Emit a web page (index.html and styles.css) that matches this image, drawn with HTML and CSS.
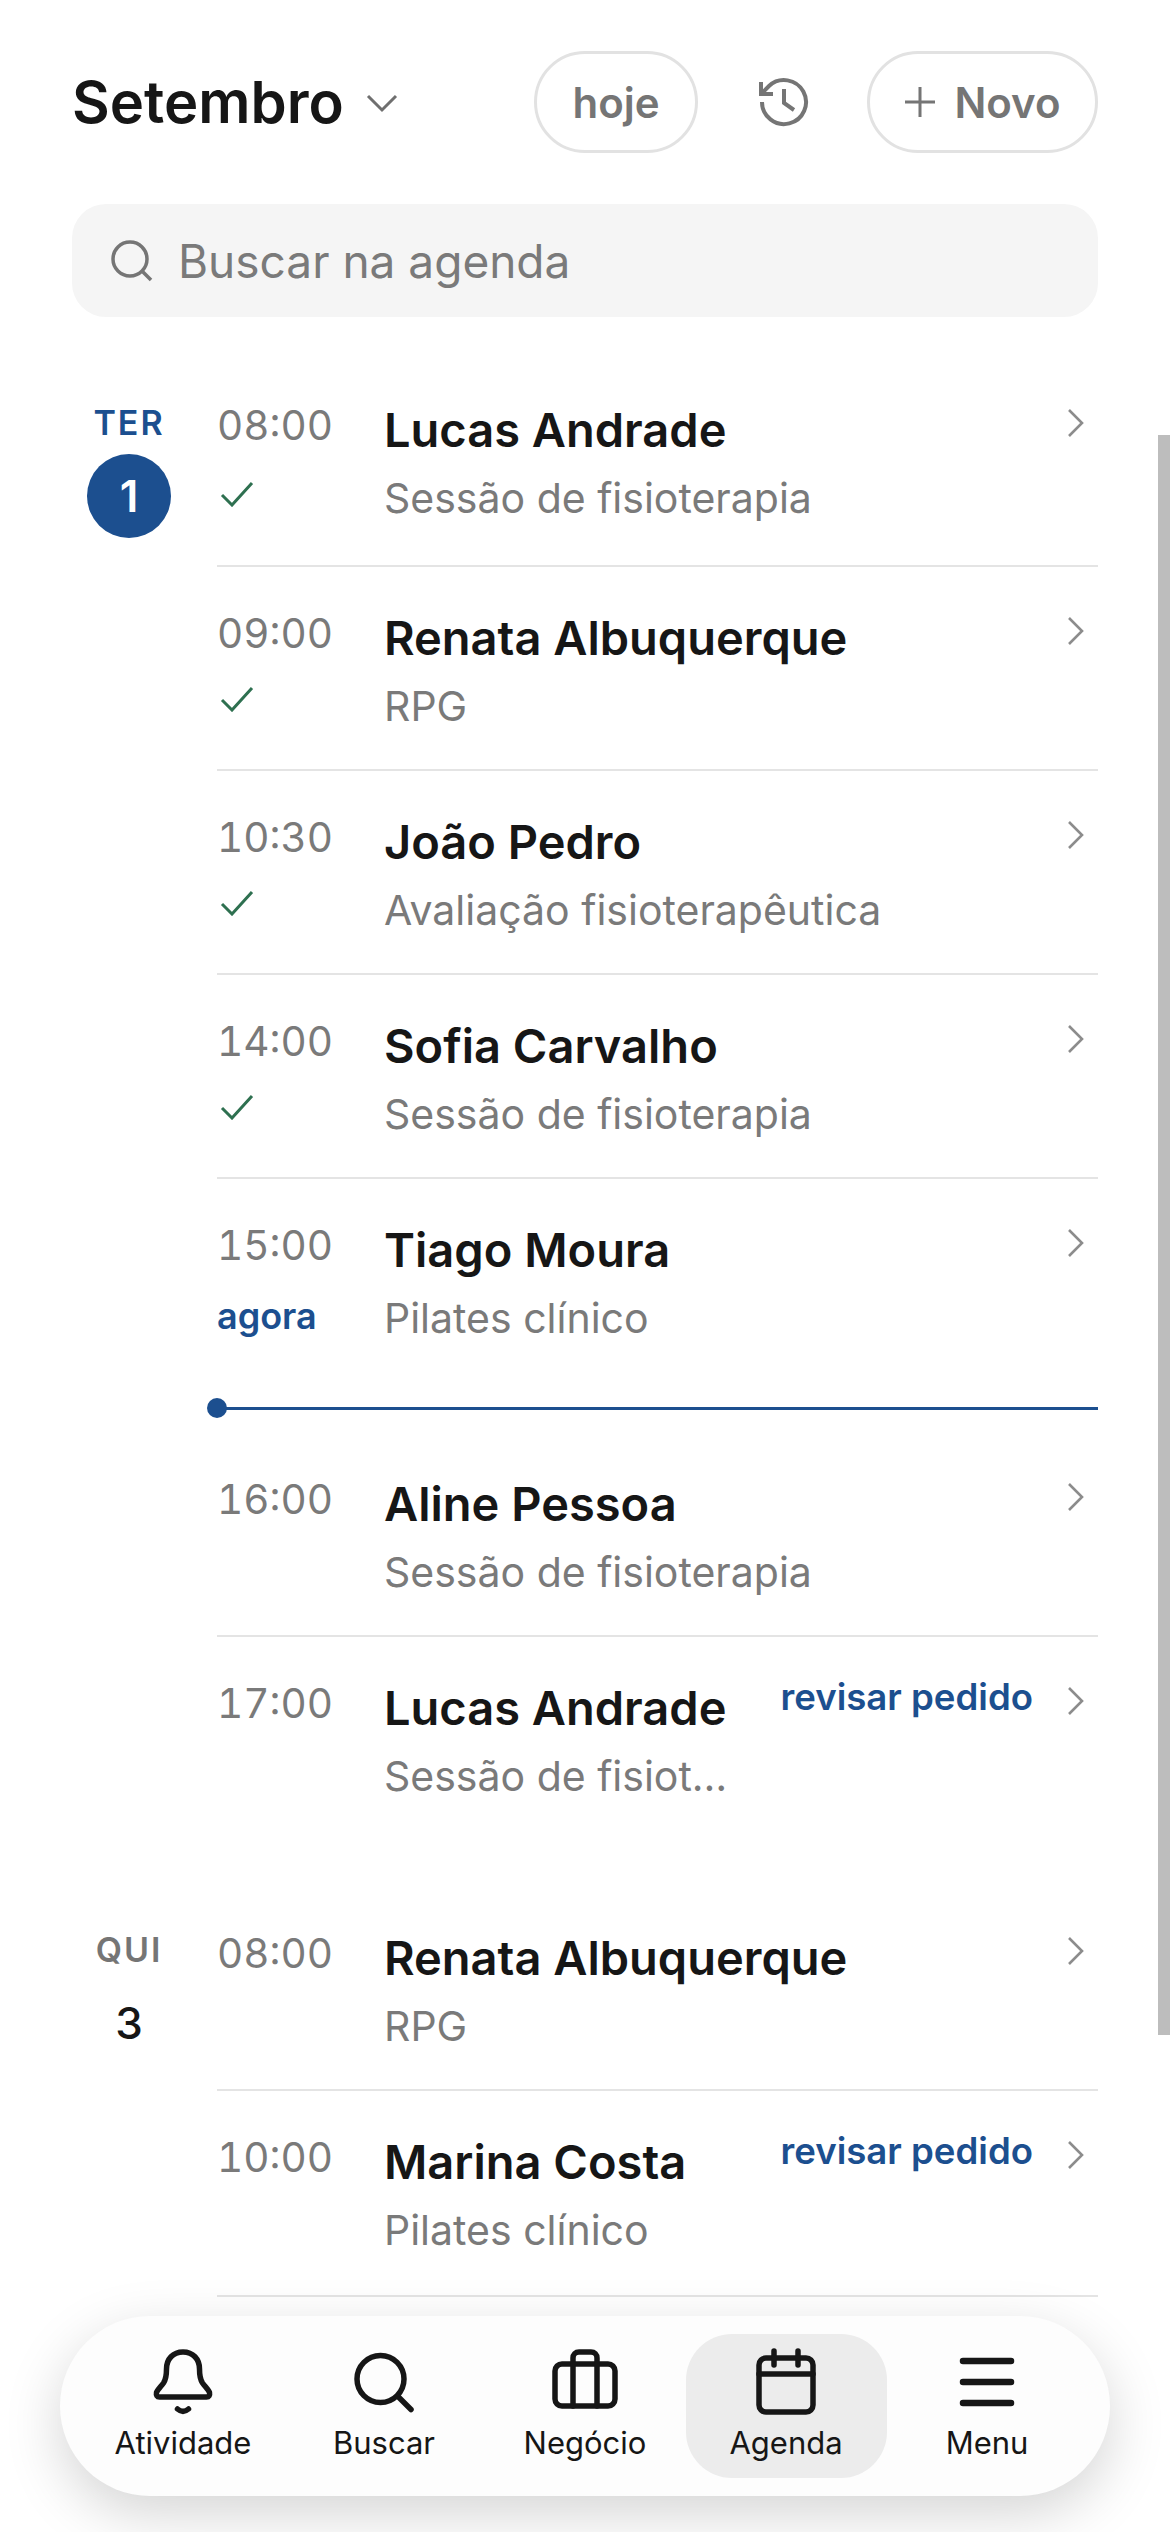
FILE: index.html
```html
<!DOCTYPE html>
<html lang="pt">
<head>
<meta charset="utf-8">
<title>Agenda</title>
<link rel="stylesheet" href="styles.css">
</head>
<body>
<div class="screen">
  <header class="top">
    <div class="month"><h1>Setembro</h1>
      <svg class="caret" viewBox="0 0 32 20"><path d="M2 3l14 14L30 3"/></svg>
    </div>
    <div class="actions">
      <button class="pill today">hoje</button>
      <svg class="history" viewBox="0 0 56 56"><path d="M6 28a22 22 0 1 0 7-16L5 20"/><path d="M5 8v12h12"/><path d="M28 15v14l10 7"/></svg>
      <button class="pill new"><svg class="plus" viewBox="0 0 32 32"><path d="M16 1v30M1 16h30"/></svg>Novo</button>
    </div>
  </header>
  <div class="search">
    <svg class="glass" viewBox="0 0 42 42"><circle cx="19" cy="19" r="17"/><path d="M31 31l9 9"/></svg>
    <span>Buscar na agenda</span>
  </div>

  <section class="group first">
    <div class="day current"><div class="dow">TER</div><div class="num">1</div></div>
    <div class="rows">
      <div class="row"><div class="time">08:00<svg class="check" viewBox="0 0 34 26"><path d="M2 14l10 10L32 2"/></svg></div><div class="main"><div class="name">Lucas Andrade</div><div class="sub">Sessão de fisioterapia</div></div><svg class="chev" viewBox="0 0 18 30"><path d="M2 2l13 13L2 28"/></svg></div>
      <div class="row"><div class="time">09:00<svg class="check" viewBox="0 0 34 26"><path d="M2 14l10 10L32 2"/></svg></div><div class="main"><div class="name">Renata Albuquerque</div><div class="sub">RPG</div></div><svg class="chev" viewBox="0 0 18 30"><path d="M2 2l13 13L2 28"/></svg></div>
      <div class="row"><div class="time">10:30<svg class="check" viewBox="0 0 34 26"><path d="M2 14l10 10L32 2"/></svg></div><div class="main"><div class="name">João Pedro</div><div class="sub">Avaliação fisioterapêutica</div></div><svg class="chev" viewBox="0 0 18 30"><path d="M2 2l13 13L2 28"/></svg></div>
      <div class="row"><div class="time">14:00<svg class="check" viewBox="0 0 34 26"><path d="M2 14l10 10L32 2"/></svg></div><div class="main"><div class="name">Sofia Carvalho</div><div class="sub">Sessão de fisioterapia</div></div><svg class="chev" viewBox="0 0 18 30"><path d="M2 2l13 13L2 28"/></svg></div>
      <div class="row plain"><div class="time">15:00<div class="now-label">agora</div></div><div class="main"><div class="name">Tiago Moura</div><div class="sub">Pilates clínico</div></div><svg class="chev" viewBox="0 0 18 30"><path d="M2 2l13 13L2 28"/></svg></div>
      <div class="nowline"><span class="dot"></span></div>
      <div class="row"><div class="time">16:00</div><div class="main"><div class="name">Aline Pessoa</div><div class="sub">Sessão de fisioterapia</div></div><svg class="chev" viewBox="0 0 18 30"><path d="M2 2l13 13L2 28"/></svg></div>
      <div class="row plain review"><div class="time">17:00</div><div class="main"><div class="name">Lucas Andrade</div><div class="sub">Sessão de fisiot…</div></div><div class="link">revisar pedido</div><svg class="chev" viewBox="0 0 18 30"><path d="M2 2l13 13L2 28"/></svg></div>
    </div>
  </section>

  <section class="group second">
    <div class="day"><div class="dow">QUI</div><div class="num">3</div></div>
    <div class="rows">
      <div class="row"><div class="time">08:00</div><div class="main"><div class="name">Renata Albuquerque</div><div class="sub">RPG</div></div><svg class="chev" viewBox="0 0 18 30"><path d="M2 2l13 13L2 28"/></svg></div>
      <div class="row review"><div class="time">10:00</div><div class="main"><div class="name">Marina Costa</div><div class="sub">Pilates clínico</div></div><div class="link">revisar pedido</div><svg class="chev" viewBox="0 0 18 30"><path d="M2 2l13 13L2 28"/></svg></div>
    </div>
  </section>

  <div class="scrollbar"></div>

  <nav class="tabbar">
    <a class="tab"><svg viewBox="0 0 72 72"><path d="M36 6C26 6 19.5 13 19.5 23c0 7-1 11-3 14-2.500 3.500-6 7-7 9.500-.5 2.500.5 4.500 3 4.500h47c2.500 0 3.500-2 3-4.500-1-2.500-4.500-6-7-9.500-2-3-3-7-3-14C52.500 13 46 6 36 6z"/><path d="M30.500 63c3.500 3 7.500 3 11 0"/></svg><span>Atividade</span></a>
    <a class="tab"><svg viewBox="0 0 72 72"><circle cx="32.500" cy="33" r="23.500"/><path d="M49.500 50L63 63.500"/></svg><span>Buscar</span></a>
    <a class="tab"><svg viewBox="0 0 72 72"><rect x="6" y="18" width="60" height="42" rx="7"/><path d="M24 60V12c0-3.500 2.500-6 6-6h12c3.500 0 6 2.500 6 6v48"/></svg><span>Negócio</span></a>
    <a class="tab active"><svg viewBox="0 0 72 72"><rect x="9" y="12" width="54" height="54" rx="7"/><path d="M9 28h54M24 5v14M48 5v14"/></svg><span>Agenda</span></a>
    <a class="tab"><svg viewBox="0 0 72 72"><path class="thick" d="M12 15h48M12 36h48M12 57h48"/></svg><span>Menu</span></a>
  </nav>
</div>
</body>
</html>
```

FILE: styles.css
```css
* { box-sizing: border-box; }
html, body { margin: 0; padding: 0; background: #fff; }
.screen {
  position: relative;
  width: 1170px;
  height: 2532px;
  overflow: hidden;
  padding: 51px 72px 0;
  font-family: Inter, "Liberation Sans", sans-serif;
  color: #161616;
}
.top { display: flex; align-items: center; justify-content: space-between; height: 102px; }
.month { display: flex; align-items: center; gap: 22px; }
.month h1 { margin: 0; font-size: 58px; font-weight: 600; line-height: 1; }
.caret { width: 32px; height: 20px; fill: none; stroke: #6f6f6f; stroke-width: 3; margin-top: 2px; }
.actions { display: flex; align-items: center; }
.pill {
  height: 102px;
  border: 3px solid #e2e2e2;
  border-radius: 51px;
  background: #fff;
  color: #757575;
  font: 600 42px Inter, sans-serif;
  display: flex;
  align-items: center;
  justify-content: center;
  padding: 0;
}
.today { width: 164px; }
.new { width: 231px; gap: 18px; }
.history { width: 56px; height: 56px; margin: 0 55px 0 58px; fill: none; stroke: #757575; stroke-width: 4; }
.plus { width: 32px; height: 32px; fill: none; stroke: #757575; stroke-width: 3; }
.search {
  display: flex; align-items: center;
  margin-top: 51px;
  height: 113px;
  border-radius: 34px;
  background: #f5f5f5;
  padding-left: 39px;
  color: #7a7a7a;
  font-size: 46px;
  gap: 25px;
}
.glass { width: 42px; height: 42px; fill: none; stroke: #757575; stroke-width: 3.5; }
.group { display: flex; }
.group.first { margin-top: 46px; }
.group.second { margin-top: 44px; }
.day { width: 114px; flex: none; margin-right: 31px; padding-top: 42px; text-align: center; }
.second .day { padding-top: 45px; }
.dow { font-size: 34px; line-height: 36px; font-weight: 600; letter-spacing: 2px; color: #757575; }
.num { width: 84px; height: 84px; margin: 13px auto 0; border-radius: 50%; font-size: 44px; font-weight: 500; line-height: 84px; }
.current .dow { color: #1c4f8f; }
.current .num { background: #1c4f8f; color: #fff; font-weight: 600; }
.rows { flex: 1; min-width: 0; }
.row { display: flex; align-items: flex-start; padding: 43px 13px 0 0; border-bottom: 2px solid #e4e4e4; height: 204px; }
.row.plain { border-bottom: 0; }
.row.review { height: 206px; }
.group.first .row:first-child { padding-top: 39px; }
.group.first .row:first-child .check { margin-top: 31px; }
.time { width: 167px; flex: none; font-size: 40.5px; line-height: 48px; color: #7a7a7a; font-variant-numeric: tabular-nums; }
.check { display: block; width: 34px; height: 26px; margin: 28px 0 0 3px; fill: none; stroke: #2e7050; stroke-width: 3; }
.now-label { margin-top: 24px; font-size: 36px; line-height: 44px; font-weight: 600; color: #1c4f8f; }
.main { flex: 1; min-width: 0; }
.name { font-size: 47px; line-height: 55px; font-weight: 600; white-space: nowrap; }
.sub { margin-top: 17px; font-size: 41px; line-height: 48px; color: #7a7a7a; white-space: nowrap; }
.link { margin: -5px 0 0 auto; font-size: 36.6px; line-height: 44px; font-weight: 600; color: #1c4f8f; white-space: nowrap; }
.chev { width: 18px; height: 30px; flex: none; margin: 6px 0 0 34px; fill: none; stroke: #8c8c8c; stroke-width: 2.6; }
.nowline { position: relative; height: 50px; }
.nowline::before { content: ""; display: block; position: relative; top: 24px; height: 3px; background: #1c4f8f; }
.dot { position: absolute; left: -10px; top: 15px; width: 20px; height: 20px; border-radius: 50%; background: #1c4f8f; }
.scrollbar { position: absolute; right: 0; top: 435px; width: 12px; height: 1600px; background: #bdbdbd; }
.tabbar {
  position: absolute;
  left: 60px; top: 2316px;
  width: 1050px; height: 180px;
  border-radius: 90px;
  background: #fdfdfd;
  box-shadow: 0 18px 56px rgba(0,0,0,.17);
  display: flex;
  padding: 18px 22.5px;
}
.tab { flex: 1; height: 144px; display: flex; flex-direction: column; align-items: center; padding-top: 12px; border-radius: 46px; font-size: 31px; color: #161616; }
.tab svg { width: 72px; height: 72px; fill: none; stroke: #161616; stroke-width: 5.5; stroke-linecap: round; stroke-linejoin: round; }
.tab svg .thick { stroke-width: 6.5; }
.tab span { margin-top: 6px; line-height: 38px; }
.tab.active { background: #ececec; }
```
